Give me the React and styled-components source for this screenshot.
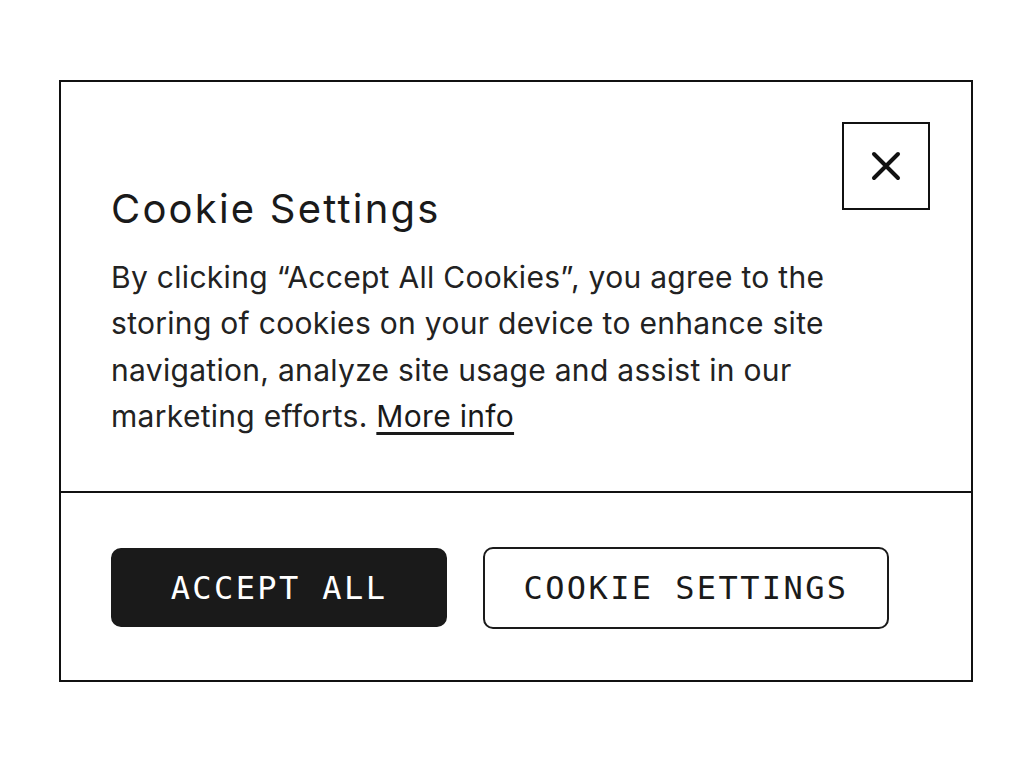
import React from 'react'
import styled, { createGlobalStyle } from 'styled-components'

const GlobalStyle = createGlobalStyle`
  html, body {
    margin: 0;
    padding: 0;
    background: #ffffff;
  }
  body {
    font-family: Inter, "Noto Sans", sans-serif;
    color: #1a1a1a;
  }
`

const Page = styled.div`
  width: 1032px;
  height: 762px;
  padding: 80px 0 0 59px;
  box-sizing: border-box;
`

const Banner = styled.section`
  width: 914px;
  height: 602px;
  box-sizing: border-box;
  border: 2px solid #111;
  display: flex;
  flex-direction: column;
`

const Top = styled.div`
  height: 411px;
  box-sizing: border-box;
  padding: 40px 41px 0 50px;
  display: flex;
  justify-content: space-between;
  align-items: flex-start;
  border-bottom: 2px solid #111;
`

const Copy = styled.div`
  padding-top: 64px;
  width: 740px;
`

const Title = styled.h2`
  margin: 0 0 22px;
  font-size: 40px;
  line-height: 46px;
  font-weight: 400;
  letter-spacing: 2.2px;
  color: #1a1a1a;
`

const Text = styled.p`
  margin: 0;
  font-size: 30px;
  line-height: 46.3px;
  letter-spacing: 0.3px;
  color: #222;
`

const MoreLink = styled.a`
  color: #1a1a1a;
  text-decoration: underline;
  text-underline-offset: 5px;
  text-decoration-thickness: 3px;
`

const CloseButton = styled.button`
  width: 88px;
  height: 88px;
  flex: none;
  box-sizing: border-box;
  border: 2px solid #111;
  background: #fff;
  padding: 0;
  display: flex;
  align-items: center;
  justify-content: center;
  cursor: pointer;
`

const Actions = styled.div`
  flex: 1;
  display: flex;
  align-items: center;
  gap: 36px;
  padding: 2px 50px 0;
`

const ActionButton = styled.button`
  height: ${p => (p.$solid ? '79px' : '82px')};
  width: ${p => p.$w}px;
  box-sizing: border-box;
  border-radius: 10px;
  border: 2px solid #1a1a1a;
  background: ${p => (p.$solid ? '#1a1a1a' : '#fff')};
  color: ${p => (p.$solid ? '#fff' : '#1a1a1a')};
  font-family: "DejaVu Sans Mono", "Liberation Mono", monospace;
  font-size: 32px;
  letter-spacing: 2.4px;
  text-transform: uppercase;
  padding: 0;
  cursor: pointer;
`

export default function App() {
  return (
    <>
      <GlobalStyle />
      <Page>
        <Banner>
          <Top>
            <Copy>
              <Title>Cookie Settings</Title>
              <Text>
                By clicking “Accept All Cookies”, you agree to the storing of cookies on your device to enhance site navigation, analyze site usage and assist in our marketing efforts. <MoreLink href="#">More info</MoreLink>
              </Text>
            </Copy>
            <CloseButton aria-label="Close">
              <svg width="32" height="32" viewBox="0 0 32 32" fill="none" stroke="#111" strokeWidth="4" strokeLinecap="round">
                <path d="M4 4 L28 28 M28 4 L4 28" />
              </svg>
            </CloseButton>
          </Top>
          <Actions>
            <ActionButton $solid $w={336}>Accept All</ActionButton>
            <ActionButton $w={406}>Cookie Settings</ActionButton>
          </Actions>
        </Banner>
      </Page>
    </>
  )
}
